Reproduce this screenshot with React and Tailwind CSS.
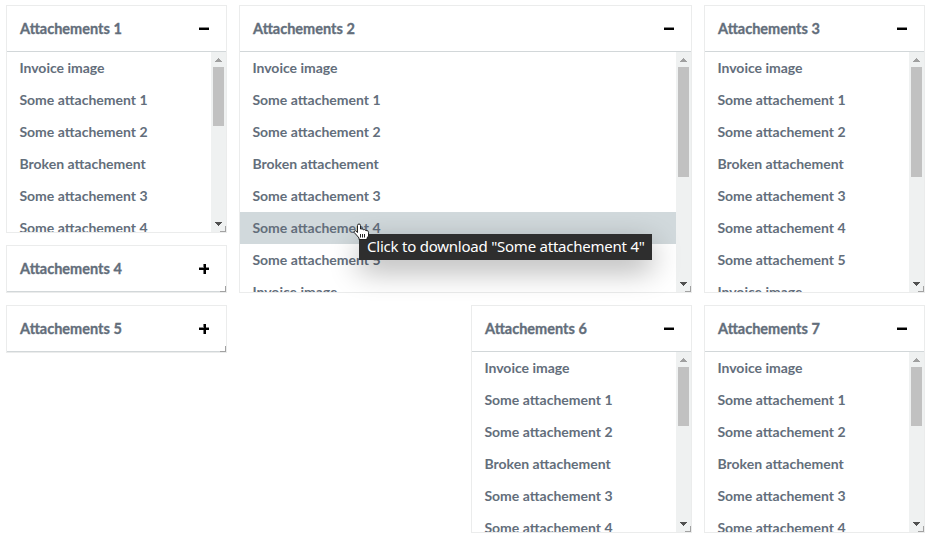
const ITEMS = [
  'Invoice image',
  'Some attachement 1',
  'Some attachement 2',
  'Broken attachement',
  'Some attachement 3',
  'Some attachement 4',
  'Some attachement 5',
  'Invoice image',
];

const CARDS = [
  { n: 1, place: 'col-start-1 row-start-1 row-span-4', thumb: 'h-[59px]', visible: 6 },
  { n: 2, place: 'col-start-2 col-span-2 row-start-1 row-span-5', thumb: 'h-[110px]', visible: 8, hovered: 5 },
  { n: 3, place: 'col-start-4 row-start-1 row-span-5', thumb: 'h-[110px]', visible: 8 },
  { n: 4, place: 'col-start-1 row-start-5', closed: true },
  { n: 5, place: 'col-start-1 row-start-6', closed: true },
  { n: 6, place: 'col-start-3 row-start-6 row-span-4', thumb: 'h-[59px]', visible: 6 },
  { n: 7, place: 'col-start-4 row-start-6 row-span-4', thumb: 'h-[59px]', visible: 6 },
];

function ToggleIcon({ closed }) {
  return (
    <svg className="h-[11px] w-[11px]" viewBox="0 0 11 11" shapeRendering="crispEdges">
      <rect x="0" y="4" width="10" height="1" fill="#888" />
      <rect x="0" y="5" width="10" height="2" fill="#000" />
      {closed && <rect x="4" y="1" width="1" height="10" fill="#777" />}
      {closed && <rect x="5" y="1" width="2" height="10" fill="#000" />}
      {closed && <rect x="4" y="5" width="1" height="2" fill="#000" />}
    </svg>
  );
}

function Scrollbar({ thumb }) {
  return (
    <div className="flex w-[15px] shrink-0 flex-col items-center bg-[#eff1f1]">
      <svg className="h-[15px] w-[15px] shrink-0" viewBox="0 0 15 15" shapeRendering="crispEdges">
        <path d="M7 6h1v1h1v1h1v1h1v1H4V9h1V8h1V7h1z" fill="#a0a0a0" />
      </svg>
      <div className={`w-[11px] bg-[#c1c1c1] ${thumb}`} />
      <svg className="mt-auto h-[15px] w-[15px] shrink-0" viewBox="0 0 15 15" shapeRendering="crispEdges">
        <path d="M4 5h7v1h-1v1H9v1H8v1H7V8H6V7H5V6H4z" fill="#505050" />
      </svg>
    </div>
  );
}

function Card({ n, place, thumb, closed, hovered, visible }) {
  return (
    <section className={`relative flex min-h-0 flex-col overflow-hidden border border-[#ebecec] bg-white ${place}`}>
      <header className="flex h-[46px] shrink-0 items-center justify-between border-b border-[#d2d7d9] pr-4 pl-[12.5px]">
        <h2 className="origin-left scale-x-[0.907] pb-px text-[16px] leading-6 font-bold [-webkit-text-stroke:0.35px_#636e7b]">
          Attachements {n}
        </h2>
        <ToggleIcon closed={closed} />
      </header>
      {!closed && (
        <div className="flex min-h-0 flex-1">
          <ul className="min-w-0 flex-1 overflow-hidden">
            {ITEMS.slice(0, visible).map((item, i) => (
              <li
                key={i}
                className={`h-8 pl-[12.4px] text-[14px] leading-8 font-bold whitespace-nowrap ${i === hovered ? 'bg-[#d1d9dc]' : ''}`}
              >
                {item}
              </li>
            ))}
          </ul>
          <Scrollbar thumb={thumb} />
        </div>
      )}
      <span className="absolute right-0 bottom-0 h-[6px] w-[6px] border-r border-b border-[#a2a2a2]" />
    </section>
  );
}

function HandCursor() {
  return (
    <svg className="absolute top-[223px] left-[353px] h-[18px] w-[17px]" viewBox="0 0 17 18">
      <path
        d="M4.5 9.5V2.5Q4.5 1 6 1t1.5 1.5V6Q9.5 5.3 10.2 6.7 12 6 12.7 7.5q2.8-.6 2.8 1.8V13l-1.5 2v1.5H6V15L3.5 12 1.2 9.5Q.8 7.6 2.5 7.7z"
        fill="#fff"
        stroke="#222"
        strokeWidth="1"
      />
      <path d="M7.5 11v3.5M9.5 11v3.5M11.5 11v3.5" stroke="#222" strokeWidth="1" />
    </svg>
  );
}

export default function App() {
  return (
    <main className="relative h-[550px] w-[935px] overflow-hidden bg-white pt-[5px] pl-[6px] font-['Lato',sans-serif] text-[#636e7b]">
      <div className="grid auto-rows-[48px] grid-cols-[221px_220px_221px_221px] gap-3">
        {CARDS.map((card) => (
          <Card key={card.n} {...card} />
        ))}
      </div>
      <div
        role="tooltip"
        className="absolute top-[234px] left-[359px] h-[26px] w-[293px] bg-[#2e2e2e] pl-2 font-['Noto_Sans',sans-serif] text-[15px] leading-[25px] tracking-[-0.23px] whitespace-nowrap text-white shadow-[0_10px_30px_rgba(0,0,0,0.32)]"
      >
        Click to download "Some attachement 4"
      </div>
      <HandCursor />
    </main>
  );
}
